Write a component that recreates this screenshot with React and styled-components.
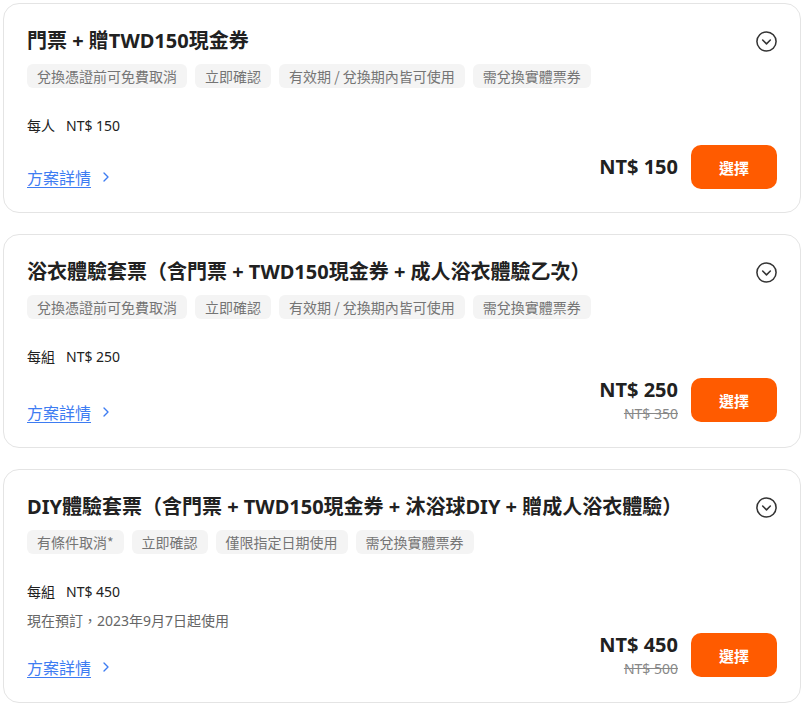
import styled, { createGlobalStyle } from 'styled-components'

const GlobalStyle = createGlobalStyle`
    body {
        margin: 0;
        background: #ffffff;
        font-family: 'Noto Sans', 'Noto Sans CJK TC', sans-serif;
        color: #212121;
    }
`

const packages = [
    {
        title: '門票 + 贈TWD150現金券',
        tags: ['兌換憑證前可免費取消', '立即確認', '有效期 / 兌換期內皆可使用', '需兌換實體票券'],
        unit: '每人',
        unitPrice: 'NT$ 150',
        price: 'NT$ 150',
        original: null,
        note: null,
    },
    {
        title: '浴衣體驗套票（含門票 + TWD150現金券 + 成人浴衣體驗乙次）',
        tags: ['兌換憑證前可免費取消', '立即確認', '有效期 / 兌換期內皆可使用', '需兌換實體票券'],
        unit: '每組',
        unitPrice: 'NT$ 250',
        price: 'NT$ 250',
        original: 'NT$ 350',
        note: null,
    },
    {
        title: 'DIY體驗套票（含門票 + TWD150現金券 + 沐浴球DIY + 贈成人浴衣體驗）',
        tags: ['有條件取消*', '立即確認', '僅限指定日期使用', '需兌換實體票券'],
        unit: '每組',
        unitPrice: 'NT$ 450',
        price: 'NT$ 450',
        original: 'NT$ 500',
        note: '現在預訂，2023年9月7日起使用',
    },
]

const App = () => {
    return <Page>
        <GlobalStyle />
        {packages.map((p, i) => <PackageCard key={i} data={p} />)}
    </Page>
}

const Page = styled.div`
    display: flex;
    flex-direction: column;
    gap: 21px;
    padding: 3px 4px 3px 3px;
`

const PackageCard = ({ data }) => {
    return <Card>
        <CardHead>
            <CardTitle>{data.title}</CardTitle>
            <ExpandIcon viewBox="0 0 24 24">
                <circle cx="12" cy="12" r="10" />
                <path d="M8 10.5l4 4 4-4" />
            </ExpandIcon>
        </CardHead>
        <Tags>
            {data.tags.map((t, i) => <Tag key={i}>{t}</Tag>)}
        </Tags>
        <UnitLine>
            <span>{data.unit}</span>
            <span>{data.unitPrice}</span>
        </UnitLine>
        {data.note && <Note>{data.note}</Note>}
        <Footer $afterNote={!!data.note}>
            <DetailLink href="#">
                <span>方案詳情</span>
                <LinkArrow viewBox="0 0 24 24">
                    <path d="M9 6l6 6-6 6" />
                </LinkArrow>
            </DetailLink>
            <Buy>
                <PriceBox>
                    <Price>{data.price}</Price>
                    {data.original && <OldPrice>{data.original}</OldPrice>}
                </PriceBox>
                <SelectBtn>選擇</SelectBtn>
            </Buy>
        </Footer>
    </Card>
}

const Card = styled.div`
    border: 1px solid #e4e4e4;
    border-radius: 16px;
    padding: 23px;
    background: #fff;
`

const CardHead = styled.div`
    display: flex;
    align-items: center;
    justify-content: space-between;
    gap: 16px;
`

const CardTitle = styled.h2`
    margin: 0;
    font-size: 20px;
    line-height: 28px;
    font-weight: 700;
    color: #212121;
`

const ExpandIcon = styled.svg`
    width: 23px;
    height: 23px;
    margin-right: -1px;
    flex-shrink: 0;
    fill: none;
    stroke: #333;
    stroke-width: 1.6;
    stroke-linecap: round;
    stroke-linejoin: round;
`

const Tags = styled.div`
    display: flex;
    flex-wrap: wrap;
    gap: 8px;
    margin-top: 9px;
`

const Tag = styled.span`
    display: inline-flex;
    align-items: center;
    height: 24px;
    padding: 0 10px;
    border-radius: 6px;
    background: #f4f4f4;
    color: #757575;
    font-size: 14px;
    font-family: 'Noto Sans CJK TC', sans-serif;
`

const UnitLine = styled.div`
    display: flex;
    gap: 11px;
    margin-top: 28px;
    font-size: 14px;
    line-height: 20px;
    color: #212121;
`

const Note = styled.div`
    margin-top: 9px;
    font-size: 14px;
    line-height: 20px;
    color: #666;
`

const Footer = styled.div`
    display: flex;
    align-items: flex-end;
    justify-content: space-between;
    margin-top: ${props => props.$afterNote ? '0px' : '9px'};
`

const DetailLink = styled.a`
    display: flex;
    align-items: center;
    gap: 7px;
    height: 24px;
    font-size: 16px;
    color: #3d7cf2;
    text-decoration: none;

    span {
        text-decoration: underline;
        text-underline-offset: 3px;
    }
`

const LinkArrow = styled.svg`
    width: 16px;
    height: 16px;
    fill: none;
    stroke: #3d7cf2;
    stroke-width: 2;
    stroke-linecap: round;
    stroke-linejoin: round;
`

const Buy = styled.div`
    display: flex;
    align-items: center;
    gap: 13px;
`

const PriceBox = styled.div`
    display: flex;
    flex-direction: column;
    align-items: flex-end;
`

const Price = styled.div`
    font-size: 20px;
    line-height: 28px;
    font-weight: 700;
    color: #212121;
`

const OldPrice = styled.div`
    font-size: 14px;
    line-height: 20px;
    color: #888;
    text-decoration: line-through;
`

const SelectBtn = styled.button`
    width: 86px;
    height: 44px;
    border: none;
    border-radius: 10px;
    background: #ff5b00;
    color: #fff;
    font-size: 15px;
    font-weight: 700;
    font-family: 'Noto Sans CJK TC', sans-serif;
    cursor: pointer;
`

export default App
